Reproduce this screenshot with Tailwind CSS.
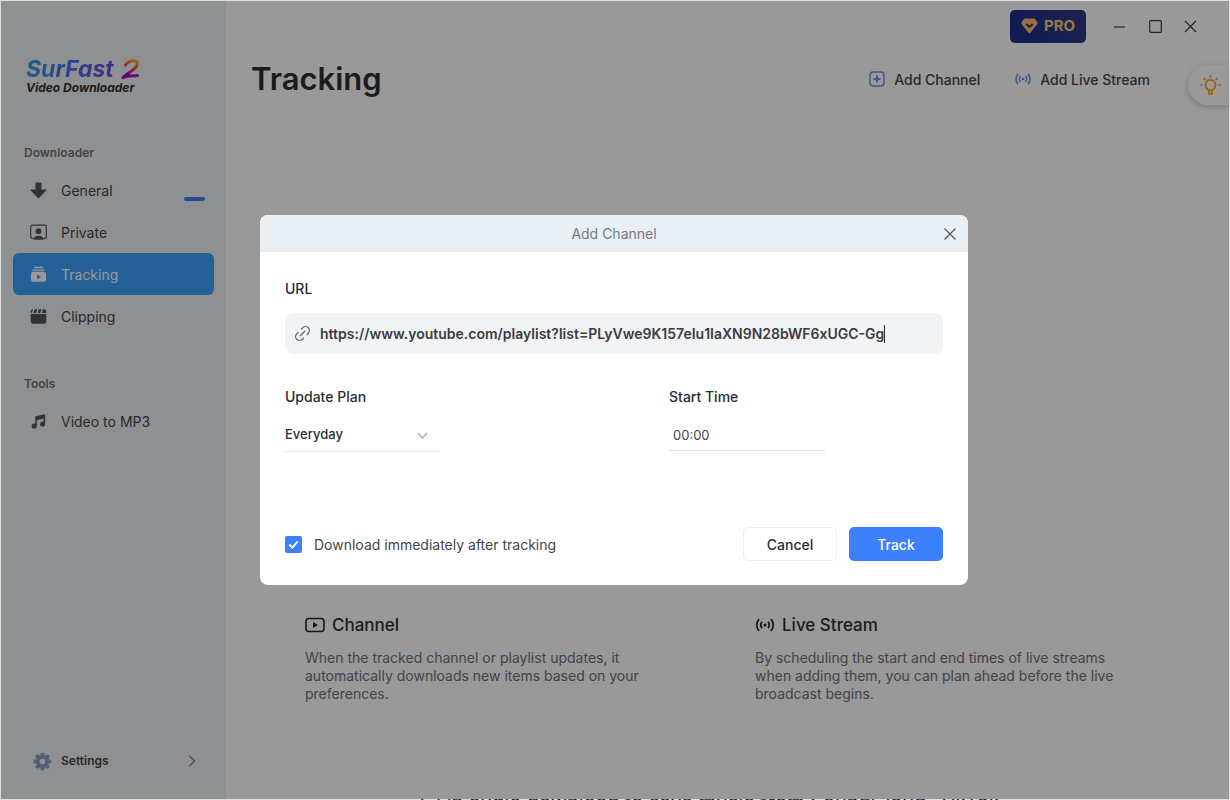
<!DOCTYPE html>
<html lang="en">
<head>
<meta charset="utf-8">
<meta name="viewport" content="width=device-width, initial-scale=1">
<title>SurFast Video Downloader</title>
<script src="https://cdn.jsdelivr.net/npm/@tailwindcss/browser@4"></script>
</head>
<body class="relative flex h-screen flex-col overflow-hidden bg-[#dcdddd] px-px pt-px font-['Inter',sans-serif] text-[14px] text-[#43454c]">

<div class="relative flex min-h-0 flex-1 bg-white">

  <!-- Sidebar -->
  <aside class="flex w-[225px] shrink-0 flex-col bg-[#eef0f2] px-3 pb-[17px] pt-[56px]">
    <div class="flex flex-col pl-[13px]">
      <div class="flex items-center gap-[3px]">
        <span class="bg-gradient-to-r from-[#2ba0e0] via-[#4a6cf0] to-[#6a4ae0] bg-clip-text pr-1 text-[23px] font-bold italic leading-[25px] text-transparent">SurFast</span>
        <svg class="h-[21px] w-[19px]" viewBox="0 0 19 21" fill="none" aria-hidden="true">
          <defs><linearGradient id="two" x1="12" y1="2" x2="6" y2="19" gradientUnits="userSpaceOnUse"><stop stop-color="#ff9a3c"/><stop offset=".45" stop-color="#f0365a"/><stop offset=".8" stop-color="#9a10d0"/></linearGradient></defs>
          <path d="M4.500 6C7 2.500 11 1.500 14 2C17.500 2.800 17 6.500 13.500 9.500C10.500 12.500 4.500 15.500 2 18.500C7 16 11 17 16.500 16.500" stroke="url(#two)" stroke-width="3" stroke-linecap="round" stroke-linejoin="round"/>
        </svg>
      </div>
      <span class="text-[12px] font-bold italic leading-[12px] text-[#2d2f36]">Video Downloader</span>
    </div>

    <h2 class="mt-[50px] pl-[11px] text-[12px] font-semibold leading-[18px] text-[#70727c]">Downloader</h2>
    <nav class="mt-[7px] flex flex-col">
      <a href="#general" class="flex h-[42px] items-center rounded-md pl-[17px] pr-[9px]">
        <svg class="size-[17px]" viewBox="0 0 17 17" fill="#53555c" aria-hidden="true"><path d="M5.500 1.500Q5.500.5 6.500.5H10.500Q11.500.5 11.500 1.500V7.500H16Q17 7.500 16.300 8.400L9.300 15.800Q8.500 16.500 7.700 15.800L.7 8.400Q0 7.500 1 7.500H5.500Z"/></svg>
        <span class="ml-[14px]">General</span>
        <span class="ml-auto mt-[17px] h-1 w-[21px] rounded-full bg-[#3d7dfb]"></span>
      </a>
      <a href="#private" class="flex h-[42px] items-center rounded-md pl-[17px]">
        <svg class="size-[17px]" viewBox="0 0 17 17" fill="#53555c" aria-hidden="true"><path d="M3.500 14.300H2A1.300 1.300 0 0 1 .7 13V2.500A1.300 1.300 0 0 1 2 1.200H15A1.300 1.300 0 0 1 16.300 2.500V13A1.300 1.300 0 0 1 15 14.300H13.500" fill="none" stroke="#53555c" stroke-width="1.200"/><circle cx="8.500" cy="7.200" r="2.900"/><path d="M3.500 15.800Q3.500 11.700 8.500 11.700T13.500 15.800Z"/></svg>
        <span class="ml-[14px]">Private</span>
      </a>
      <a href="#tracking" aria-current="page" class="flex h-[42px] items-center rounded-md bg-[#3c9efa] pl-[17px] text-white">
        <svg class="size-[17px]" viewBox="0 0 17 17" fill="#fff" aria-hidden="true"><path d="M4.500 1.500H12.500M3 4.200H14" stroke="#fff" stroke-width="1.300" stroke-linecap="round"/><rect x="1" y="5.800" width="15" height="10" rx="2.200"/><path d="M7 8.300L11 10.800L7 13.300Z" fill="#3c9efa"/></svg>
        <span class="ml-[14px]">Tracking</span>
      </a>
      <a href="#clipping" class="flex h-[42px] items-center rounded-md pl-[17px]">
        <svg class="size-[17px]" viewBox="0 0 17 17" fill="#53555c" aria-hidden="true"><path d="M.7 6H16.300V13.500A2.300 2.300 0 0 1 14 15.800H3A2.300 2.300 0 0 1 .7 13.500ZM.7 4.900V3.500Q.7 1.300 3 1.200L2.200 4.900ZM4.600 1.200H7.200L6.200 4.900H3.600ZM8.800 1.200H11.400L10.400 4.900H7.800ZM13 1.200H14Q16.300 1.300 16.300 3.500V4.900H12Z"/></svg>
        <span class="ml-[14px]">Clipping</span>
      </a>
    </nav>

    <h2 class="mt-[38px] pl-[11px] text-[12px] font-semibold leading-[18px] text-[#70727c]">Tools</h2>
    <nav class="mt-[7px]">
      <a href="#mp3" class="flex h-[42px] items-center rounded-md pl-[17px]">
        <svg class="size-[17px]" viewBox="0 0 17 17" fill="#53555c" aria-hidden="true"><circle cx="4.200" cy="13" r="2.600"/><circle cx="12.600" cy="11" r="2.600"/><path d="M5.200 4.200Q5.200 3.500 6 3.300L14.200 1.200Q15.200 1 15.200 2V11H13.600V5.400L6.800 7.200V13H5.200Z"/></svg>
        <span class="ml-[14px]">Video to MP3</span>
      </a>
    </nav>

    <a href="#settings" class="mt-auto flex h-[42px] items-center pl-[20px] pr-[18px] text-[12px] font-semibold">
      <svg class="size-[19px]" viewBox="0 0 20 20" fill="#8f9dc0" aria-hidden="true"><g><rect x="8" y=".7" width="4" height="18.600" rx="1"/><rect x="8" y=".7" width="4" height="18.600" rx="1" transform="rotate(45 10 10)"/><rect x="8" y=".7" width="4" height="18.600" rx="1" transform="rotate(90 10 10)"/><rect x="8" y=".7" width="4" height="18.600" rx="1" transform="rotate(135 10 10)"/><circle cx="10" cy="10" r="7"/></g><circle cx="10" cy="10" r="3" fill="#eef0f2"/></svg>
      <span class="ml-[9px]">Settings</span>
      <svg class="ml-auto h-[12px] w-[8px]" viewBox="0 0 8 12" fill="none" stroke="#8a8c94" stroke-width="1.500" aria-hidden="true"><path d="M1.500 1L6.500 6L1.500 11"/></svg>
    </a>
  </aside>

  <!-- Main -->
  <main class="flex min-w-0 flex-1 flex-col">
    <div class="flex h-[50px] items-center justify-end pr-[32px]">
      <button class="mr-[27px] flex h-[33px] w-[76px] items-center justify-center gap-[6px] rounded-[5px] bg-gradient-to-r from-[#1b2c8c] to-[#2d3a83] text-[15px] font-bold text-[#ffc880]">
        <svg class="h-[16px] w-[17px]" viewBox="0 0 17 16" aria-hidden="true"><path d="M4 .5H13Q13.800.5 14.300 1.200L16.500 4.600Q17 5.500 16.300 6.300L9.400 14.800Q8.500 15.700 7.600 14.800L.7 6.300Q0 5.500.5 4.600L2.700 1.200Q3.200.5 4 .5Z" fill="#ffbc68"/><path d="M5.200 6L8.500 9L11.800 6" fill="none" stroke="#24348a" stroke-width="1.800"/></svg>
        PRO
      </button>
      <button aria-label="Minimize" class="mr-[23px]"><svg class="size-[13px]" viewBox="0 0 13 13" fill="none" stroke="#3a3c42" stroke-width="1.200"><path d="M1 7H12"/></svg></button>
      <button aria-label="Maximize" class="mr-[22px]"><svg class="size-[13px]" viewBox="0 0 13 13" fill="none" stroke="#3a3c42" stroke-width="1.200"><rect x=".7" y=".7" width="11.600" height="11.600" rx="1"/></svg></button>
      <button aria-label="Close"><svg class="size-[13px]" viewBox="0 0 13 13" fill="none" stroke="#3a3c42" stroke-width="1.200"><path d="M1 1L12 12M12 1L1 12"/></svg></button>
    </div>

    <header class="flex h-[56px] items-center pl-[25px] pr-[79px]">
      <h1 class="text-[31px] font-semibold text-[#2d2f36]">Tracking</h1>
      <button class="ml-auto flex items-center gap-[9px] font-medium">
        <svg class="size-[16px]" viewBox="0 0 16 16" fill="none" stroke="#6a94ee" stroke-width="1.500" aria-hidden="true"><rect x="1" y="1" width="14" height="14" rx="3.200"/><path d="M8 4.500V11.500M4.500 8H11.500" stroke-width="2"/></svg>
        Add Channel
      </button>
      <button class="ml-[35px] flex items-center gap-[9px] font-medium">
        <svg class="size-[16px]" viewBox="0 0 16 16" fill="none" stroke="#6a94ee" stroke-width="1.500" aria-hidden="true"><circle cx="8" cy="8" r="1.300" fill="#6a94ee" stroke="none"/><path d="M3 2.700Q-1 8 3 13.300M13 2.700Q17 8 13 13.300M5.500 5Q3.200 8 5.500 11M10.500 5Q12.800 8 10.500 11"/></svg>
        Add Live Stream
      </button>
    </header>

    <section class="mb-[96px] mt-auto grid grid-cols-2 gap-[55px] px-[79px]">
      <article>
        <h3 class="flex items-center gap-[7px] text-[17px] font-medium leading-[24px] text-[#2d2f36]">
          <svg class="h-[16px] w-[20px]" viewBox="0 0 20 16" fill="none" aria-hidden="true"><rect x="1" y="1.500" width="18" height="13" rx="3" stroke="#22242a" stroke-width="1.600"/><path d="M8 5L13 8L8 11Z" fill="#22242a"/></svg>
          Channel
        </h3>
        <p class="mt-3 max-w-[384px] leading-[18px] text-[#6e7078]">When the tracked channel or playlist updates, it automatically downloads new items based on your preferences.</p>
      </article>
      <article>
        <h3 class="flex items-center gap-[7px] text-[17px] font-medium leading-[24px] text-[#2d2f36]">
          <svg class="h-[16px] w-[20px]" viewBox="0 0 20 16" fill="none" stroke="#22242a" stroke-width="1.700" aria-hidden="true"><circle cx="10" cy="8" r="1.500" fill="#22242a" stroke="none"/><path d="M4 2Q-.6 8 4 14M16 2Q20.600 8 16 14M7 4.800Q4.500 8 7 11.200M13 4.800Q15.500 8 13 11.200"/></svg>
          Live Stream
        </h3>
        <p class="mt-3 max-w-[384px] leading-[18px] text-[#6e7078]">By scheduling the start and end times of live streams when adding them, you can plan ahead before the live broadcast begins.</p>
      </article>
    </section>
  </main>

  <!-- Floating tips tab -->
  <button aria-label="Tips" class="absolute right-0 top-[64px] flex h-[40px] w-[41px] items-center rounded-l-full bg-white pl-[12px] shadow-[0_2px_6px_rgba(0,0,0,0.2)]">
    <svg class="size-[21px]" viewBox="0 0 21 21" fill="none" stroke="#ffa41a" stroke-width="1.700" stroke-linecap="round" aria-hidden="true"><path d="M8.500 14.800Q5.500 13 5.500 9.900A5 5 0 0 1 15.500 9.900Q15.500 13 12.500 14.800ZM9 15V18.800H12V15M10.500 1V2M4 3.500L4.800 4.300M17 3.500L16.200 4.300M1 10H2M20 10H19"/></svg>
  </button>

  <!-- Dialog -->
  <div class="absolute inset-0 flex items-center justify-center bg-black/40 pr-0.5">
    <form role="dialog" aria-labelledby="dlg-title" class="w-[708px] max-w-full overflow-hidden rounded-lg bg-white">
      <div class="relative flex h-[37px] items-center justify-center bg-[#e9eff3]">
        <h2 id="dlg-title" class="text-[#757985]">Add Channel</h2>
        <button type="button" aria-label="Close dialog" class="absolute right-[12px]"><svg class="size-[12px]" viewBox="0 0 12 12" fill="none" stroke="#50535c" stroke-width="1.200"><path d="M.5.5L11.500 11.500M11.500.5L.5 11.500"/></svg></button>
      </div>
      <div class="px-[25px] pb-[24px] pt-[27px]">
        <label for="url" class="block font-medium leading-[20px] text-[#2b2d33]">URL</label>
        <div class="mt-[14px] flex h-[41px] items-center rounded-lg bg-[#f1f3f5] pl-[9px]">
          <svg class="size-[17px] shrink-0" viewBox="0 0 24 24" fill="none" stroke="#6d7078" stroke-width="2" stroke-linecap="round" aria-hidden="true"><path transform="rotate(-45 12 12)" d="M8.500 17.500H6A5.500 5.500 0 0 1 6 6.500H8.500M15.500 6.500H18A5.500 5.500 0 0 1 18 17.500H15.500M7.500 12H16.500"/></svg>
          <input id="url" type="text" value="https://www.youtube.com/playlist?list=PLyVwe9K157eIu1IaXN9N28bWF6xUGC-Gg" class="ml-[9px] field-sizing-content max-w-full font-semibold text-[#3a3c43] outline-none">
          <span class="h-[18px] w-px bg-[#2b2d33]"></span>
        </div>
        <div class="mt-[33px] grid grid-cols-[384px_1fr]">
          <div>
            <label for="plan" class="block font-medium leading-[20px] text-[#2b2d33]">Update Plan</label>
            <div class="mt-[12px] flex h-[33px] w-[156px] items-center border-b border-[#e4e7ec]">
              <select id="plan" class="h-full flex-1 appearance-none text-[13px] font-medium text-[#2b2d33]"><option>Everyday</option></select>
              <svg class="mr-[13px] h-[7px] w-[11px]" viewBox="0 0 11 7" fill="none" stroke="#a9aeba" stroke-width="1.500" aria-hidden="true"><path d="M1 1L5.500 6L10 1"/></svg>
            </div>
          </div>
          <div>
            <label for="time" class="block font-medium leading-[20px] text-[#2b2d33]">Start Time</label>
            <input id="time" type="text" value="00:00" class="mt-[12px] block h-[32px] w-[156px] border-b border-[#dfe2e8] pl-1 text-[13px] text-[#43454c]">
          </div>
        </div>
        <div class="mt-[75px] flex items-center">
          <input id="now" type="checkbox" checked class="size-[17px] appearance-none rounded-xs bg-[#3d80fe] bg-[url('data:image/svg+xml,%3Csvg%20xmlns=%22http://www.w3.org/2000/svg%22%20viewBox=%220%200%2016%2016%22%3E%3Cpath%20d=%22M4%208L7%2011L12%205%22%20fill=%22none%22%20stroke=%22white%22%20stroke-width=%221.800%22/%3E%3C/svg%3E')]">
          <label for="now" class="ml-[12px] text-[#43454c]">Download immediately after tracking</label>
          <button type="button" class="ml-auto h-[34px] w-[94px] rounded-[5px] border border-[#eceff3] font-medium text-[#2b2d33]">Cancel</button>
          <button type="submit" class="ml-[12px] h-[34px] w-[94px] rounded-[5px] bg-[#3d80fe] font-medium text-white">Track</button>
        </div>
      </div>
    </form>
  </div>
</div>

<!-- Top edge of the page that lies behind the window -->
<div class="h-px shrink-0 overflow-hidden pl-[412px] text-[#222222]"><p class="-mt-[8px] whitespace-nowrap text-[20px] leading-[22px]">3. On audio download to save music from SoundCloud, TikTok.</p></div>
</body>
</html>
